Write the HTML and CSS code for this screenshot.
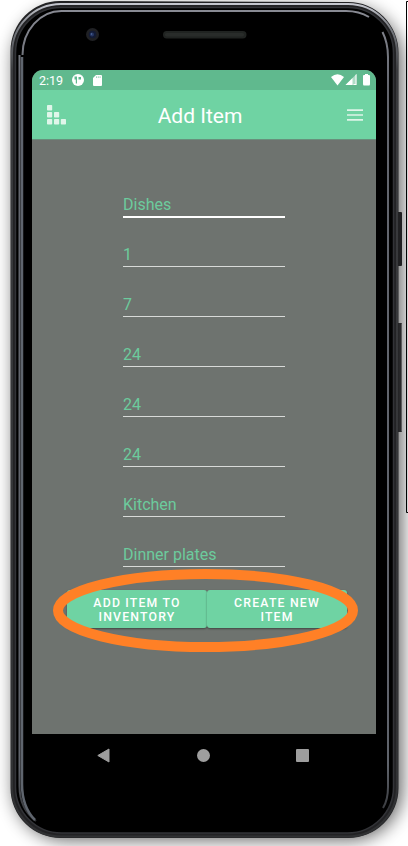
FILE: index.html
```html
<!DOCTYPE html>
<html lang="en">
<head>
<meta charset="utf-8">
<title>Add Item</title>
<link rel="stylesheet" href="styles.css">
</head>
<body>
<div class="stage">
  <svg class="frame" width="408" height="846" viewBox="0 0 408 846" aria-hidden="true">
    <defs>
      <filter id="shade" x="-20%" y="-20%" width="140%" height="140%"><feGaussianBlur stdDeviation="9"/></filter>
      <linearGradient id="rim" x1="0" y1="0" x2="0" y2="1">
        <stop offset="0" stop-color="#c5c7cf"/><stop offset=".03" stop-color="#777a80"/><stop offset=".08" stop-color="#3a3b3e"/><stop offset="1" stop-color="#303133"/>
      </linearGradient>
      <linearGradient id="glassedge" gradientUnits="userSpaceOnUse" x1="0" y1="8" x2="0" y2="822">
        <stop offset="0" stop-color="#8a8c95"/><stop offset=".1" stop-color="#63666e"/><stop offset=".93" stop-color="#5f636b"/><stop offset="1" stop-color="#303134"/>
      </linearGradient>
    </defs>
    <rect x="14" y="8" width="388" height="832" rx="52" fill="#000" opacity=".62" filter="url(#shade)"/>
    <path d="M410 1.500H406.500V512.500H410" fill="none" stroke="#000"/>
    <rect x="397" y="212" width="5" height="54" rx="1" fill="#202022"/>
    <rect x="397" y="323" width="5" height="109" rx="1" fill="#29292b"/>
    <path d="M401.500 324V431" stroke="#5c5c5e"/>
    <path d="M10.500 51A49 50 0 0 1 60 1L348 2A50 51 0 0 1 398.500 53V788A50 50 0 0 1 348 838H61A50 50 0 0 1 10.500 788Z" fill="#222224"/>
    <path d="M12 53A49 49 0 0 1 61 4H348A49 49 0 0 1 397 53V787A49 49 0 0 1 348 836.500H61A49 49 0 0 1 12 787Z" fill="none" stroke="url(#rim)" stroke-width="2"/>
    <path d="M15.500 53A45.500 45.500 0 0 1 61 7.500H348A45.500 45.500 0 0 1 393.500 53V787A46 46 0 0 1 347.500 833H61.500A46 46 0 0 1 15.500 787Z" fill="#000" stroke="#323337" stroke-width="1.500"/>
    <path d="M19.500 55V786Q19.500 809 36 821M22.500 55A39 44 0 0 1 62 11H346Q359 11 369 17M382.500 32Q388 43 388 57V787Q388 800 383 808" fill="none" stroke="url(#glassedge)" stroke-width="2"/>
    <path d="M22 57V784Q22 807 35 820" fill="none" stroke="#5f656e" stroke-width="2.500"/>
    <circle cx="92.500" cy="34.500" r="6.500" fill="#202124"/>
    <circle cx="92.500" cy="34.500" r="3.800" fill="#131b35"/>
    <circle cx="92" cy="34.500" r="2" fill="#263764"/>
    <circle cx="91.500" cy="34" r=".7" fill="#5874a3"/>
    <rect x="163" y="31" width="83.500" height="7.500" rx="3.700" fill="#202321"/>
    <rect x="165" y="33" width="79" height="3.500" rx="1.700" fill="#292c2a"/>
  </svg>
  <main class="screen">
    <header class="status">
      <span class="time">2:19</span>
      <svg class="notif" width="12" height="12" viewBox="0 0 12 12"><circle cx="6" cy="6" r="6" fill="#fff"/><path d="M2.500 2.500H5V9.500H3.800V5.500H2.500Z" fill="#60b98e"/><path d="M6.500 3H9V5.500H6.500Z" fill="#60b98e"/></svg>
      <svg class="card" width="9" height="11" viewBox="0 0 9 11"><path d="M3 0H8Q9 0 9 1V10Q9 11 8 11H1Q0 11 0 10V3Z" fill="#fff"/><path d="M3.500 1.300V3M5.300 1.300V3M7.100 1.300V3" stroke="#60b98e" stroke-width=".6"/></svg>
      <svg class="signals" width="40" height="12" viewBox="0 0 40 12"><path d="M0 3Q6.500-2.500 13 3L6.500 11.500Z" fill="#fff"/><path d="M14.500 11L25.500 0V11Z" fill="#fff" opacity=".5"/><path d="M14.500 11L21.500 4V11ZM24.500 1L25.500 0V11H22.500V10H24.500Z" fill="#fff"/><path d="M33 1H34V0H37V1H38Q39 1 39 2V10Q39 11.500 38 11.500H33Q32 11.500 32 10V2Q32 1 33 1Z" fill="#fff"/></svg>
    </header>
    <nav class="appbar">
      <svg class="logo" width="20" height="20" viewBox="0 0 20 20" fill="#e0f6ea"><rect x="0" y="0" width="5.200" height="5.500" rx=".8"/><rect x="0" y="7" width="5.200" height="5.500" rx=".8"/><rect x="7" y="7" width="5.200" height="5.500" rx=".8"/><rect x="0" y="14" width="5.200" height="5.500" rx=".8"/><rect x="7" y="14" width="5.200" height="5.500" rx=".8"/><rect x="13.800" y="14" width="5.200" height="5.500" rx=".8"/></svg>
      <h1>Add Item</h1>
      <svg class="menu" width="16" height="12" viewBox="0 0 16 12"><path d="M0 1.200H16M0 6H16M0 10.800H16" stroke="#def5e9" stroke-width="1.700"/></svg>
    </nav>
    <form class="form">
      <div class="field focused">Dishes</div>
      <div class="field">1</div>
      <div class="field">7</div>
      <div class="field">24</div>
      <div class="field">24</div>
      <div class="field">24</div>
      <div class="field">Kitchen</div>
      <div class="field">Dinner plates</div>
      <div class="actions">
        <button type="button">ADD ITEM TO<br>INVENTORY</button>
        <button type="button">CREATE NEW<br>ITEM</button>
        <svg class="highlight" width="306" height="84" viewBox="0 0 306 84"><ellipse cx="152.500" cy="41.500" rx="147.500" ry="36.500" fill="none" stroke="#ff8026" stroke-width="10"/></svg>
      </div>
    </form>
  </main>
  <footer class="navkeys">
    <svg width="13" height="15" viewBox="0 0 13 15"><path d="M.8 7.500L12 1V14Z" fill="#9e9e9e" stroke="#9e9e9e" stroke-linejoin="round"/></svg>
    <svg width="13" height="13" viewBox="0 0 13 13"><circle cx="6.500" cy="6.500" r="6.500" fill="#9e9e9e"/></svg>
    <svg width="13" height="13" viewBox="0 0 13 13"><rect width="13" height="13" rx="1" fill="#9e9e9e"/></svg>
  </footer>
</div>
</body>
</html>
```
FILE: styles.css
```css
* { box-sizing: border-box; }
body { margin: 0; background: #fff; font-family: Roboto, sans-serif; overflow: hidden; }
svg { display: block; flex: none; }
.stage { position: relative; width: 408px; height: 846px; padding: 70px 32px 0; overflow: hidden; }
.frame { position: absolute; inset: 0; }
.screen { position: relative; height: 664px; background: #6e736f; border-radius: 11px 11px 0 0; overflow: hidden; }
.status { height: 20px; background: #60b98e; display: flex; align-items: center; padding: 0 5px 0 7px; color: #fff; }
.time { width: 33px; font-size: 12.500px; line-height: 20px; padding-top: 1px; }
.card { margin-left: 9px; }
.signals { margin-left: auto; }
.appbar { height: 50px; background: #6fd3a3; display: grid; grid-template-columns: 20px 1fr 20px; align-items: center; padding: 0 13px 0 15px; border-bottom: 1px solid #68907c; }
.logo { margin-top: 1px; }
.appbar h1 { margin: 3px 10px 0 0; color: #fff; font-size: 21px; line-height: 26px; font-weight: 400; text-align: center; }
.menu { justify-self: end; }
.form { margin: 0; padding-top: 27px; }
.field { width: 162px; height: 50px; margin-left: 91px; padding-top: 28px; border-bottom: 1px solid #d8dad8; color: #6ccb9d; font-size: 16px; line-height: 20px; }
.focused { height: 51px; margin-bottom: -1px; border-bottom: 2px solid #fff; }
.actions { position: relative; display: flex; width: 280px; margin: 23px 0 0 35px; }
.actions button { width: 140px; height: 38px; padding: 2px 0 0; border: 0; border-radius: 3px; background: #6fd3a3; color: #fff; font: 500 12.250px/14.500px Roboto, sans-serif; letter-spacing: 1.200px; box-shadow: 0 1px 2px #0006; }
.highlight { position: absolute; left: -14px; top: -21px; }
.navkeys { position: relative; height: 42px; display: flex; align-items: center; justify-content: space-between; padding: 0 67px 0 65px; }
```
